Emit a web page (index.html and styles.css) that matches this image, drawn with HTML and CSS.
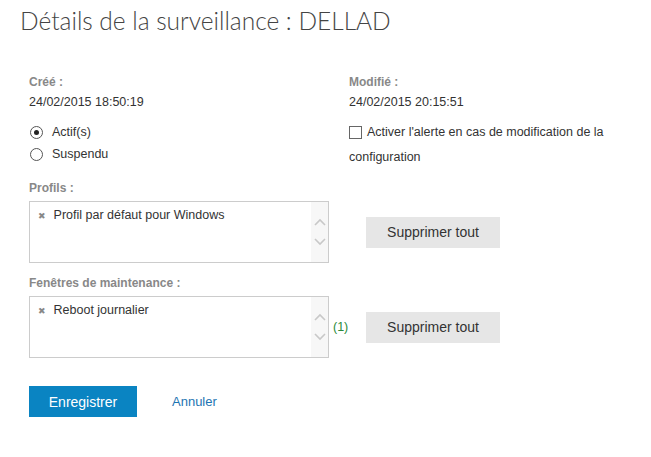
FILE: index.html
```html
<!DOCTYPE html>
<html lang="fr">
<head>
<meta charset="utf-8">
<title>Détails de la surveillance</title>
<link rel="stylesheet" href="styles.css">
</head>
<body>
<h1 class="title">Détails de la surveillance : DELLAD</h1>
<div class="form">
  <div class="meta">
    <div class="col">
      <div class="label">Créé :</div>
      <div class="value">24/02/2015 18:50:19</div>
      <div class="radios">
        <div class="radio-row"><span class="radio checked"></span><span>Actif(s)</span></div>
        <div class="radio-row"><span class="radio"></span><span>Suspendu</span></div>
      </div>
    </div>
    <div class="col">
      <div class="label">Modifié :</div>
      <div class="value">24/02/2015 20:15:51</div>
      <div class="check-row"><span class="checkbox"></span><span class="check-text">Activer l'alerte en cas de modification de la configuration</span></div>
    </div>
  </div>

  <div class="section first">
    <div class="label">Profils :</div>
    <div class="list-row">
      <div class="listbox">
        <div class="items"><div class="item"><span class="x">✖</span>Profil par défaut pour Windows</div></div>
        <div class="scroll">
          <svg width="12" height="8" viewBox="0 0 12 8"><path d="M1 7 L6 2 L11 7" fill="none" stroke="#c8c8c8" stroke-width="1.6"/></svg>
          <svg width="12" height="8" viewBox="0 0 12 8"><path d="M1 1 L6 6 L11 1" fill="none" stroke="#c8c8c8" stroke-width="1.6"/></svg>
        </div>
      </div>
      <div class="count"></div>
      <button class="btn-grey">Supprimer tout</button>
    </div>
  </div>

  <div class="section">
    <div class="label">Fenêtres de maintenance :</div>
    <div class="list-row">
      <div class="listbox">
        <div class="items"><div class="item"><span class="x">✖</span>Reboot journalier</div></div>
        <div class="scroll">
          <svg width="12" height="8" viewBox="0 0 12 8"><path d="M1 7 L6 2 L11 7" fill="none" stroke="#c8c8c8" stroke-width="1.6"/></svg>
          <svg width="12" height="8" viewBox="0 0 12 8"><path d="M1 1 L6 6 L11 1" fill="none" stroke="#c8c8c8" stroke-width="1.6"/></svg>
        </div>
      </div>
      <div class="count">(1)</div>
      <button class="btn-grey">Supprimer tout</button>
    </div>
  </div>

  <div class="actions">
    <button class="btn-primary">Enregistrer</button>
    <a class="cancel" href="#">Annuler</a>
  </div>
</div>
</body>
</html>
```

FILE: styles.css
```css
* { box-sizing: border-box; }
body {
  margin: 0;
  background: #fff;
  font-family: "Liberation Sans", Arial, sans-serif;
  font-size: 12.5px;
  color: #333;
}
.title {
  margin: 0 0 0 20px;
  font-family: Lato, "Open Sans", sans-serif;
  font-weight: 300;
  font-size: 24.5px;
  line-height: 42px;
  color: #444;
}
.form {
  padding: 30px 0 0 29px;
}
.meta {
  display: grid;
  grid-template-columns: 320px 300px;
}
.label {
  color: #888;
  font-weight: bold;
  font-size: 12px;
  line-height: 20px;
}
.value {
  line-height: 20px;
}
.radios {
  margin-top: 9px;
}
.radio-row {
  display: flex;
  align-items: center;
  height: 22px;
}
.radio {
  width: 13px;
  height: 13px;
  border: 1px solid #555;
  border-radius: 50%;
  margin: 0 9px 0 1px;
  display: flex;
  align-items: center;
  justify-content: center;
}
.radio.checked::after {
  content: "";
  width: 5px;
  height: 5px;
  border-radius: 50%;
  background: #222;
}
.check-row {
  margin-top: 8px;
  display: flex;
  align-items: flex-start;
}
.checkbox {
  flex: none;
  width: 13px;
  height: 13px;
  border: 1px solid #666;
  margin: 6px 5px 0 0;
}
.check-text {
  line-height: 25px;
  width: 275px;
  margin-left: -18px;
  text-indent: 18px;
}
.section.first {
  margin-top: 8px;
}
.section {
  margin-top: 10px;
}
.section .label {
  margin-bottom: 3px;
}
.list-row {
  display: flex;
  align-items: center;
}
.listbox {
  width: 300px;
  height: 62px;
  border: 1px solid #ccc;
  display: flex;
}
.items {
  flex: 1;
  padding: 5px 0 0 8px;
}
.item {
  line-height: 16px;
}
.x {
  color: #888;
  font-size: 9px;
  margin-right: 8px;
  font-family: "DejaVu Sans", sans-serif;
}
.scroll {
  width: 17px;
  background: #f7f7f7;
  display: flex;
  flex-direction: column;
  align-items: center;
  justify-content: center;
  gap: 12px;
}
.count {
  width: 37px;
  padding-left: 4px;
  color: #2a8a3a;
}
.btn-grey {
  width: 134px;
  height: 31px;
  border: none;
  background: #e6e6e6;
  color: #333;
  font-family: "Liberation Sans", Arial, sans-serif;
  font-size: 14px;
  padding: 0;
}
.actions {
  margin-top: 28px;
  display: flex;
  align-items: center;
}
.btn-primary {
  width: 108px;
  height: 31px;
  border: none;
  background: #0a84c2;
  color: #fff;
  font-family: "Liberation Sans", Arial, sans-serif;
  font-size: 14px;
  padding: 0;
}
.cancel {
  margin-left: 35px;
  color: #1d74b2;
  text-decoration: none;
  font-size: 13px;
}
```
